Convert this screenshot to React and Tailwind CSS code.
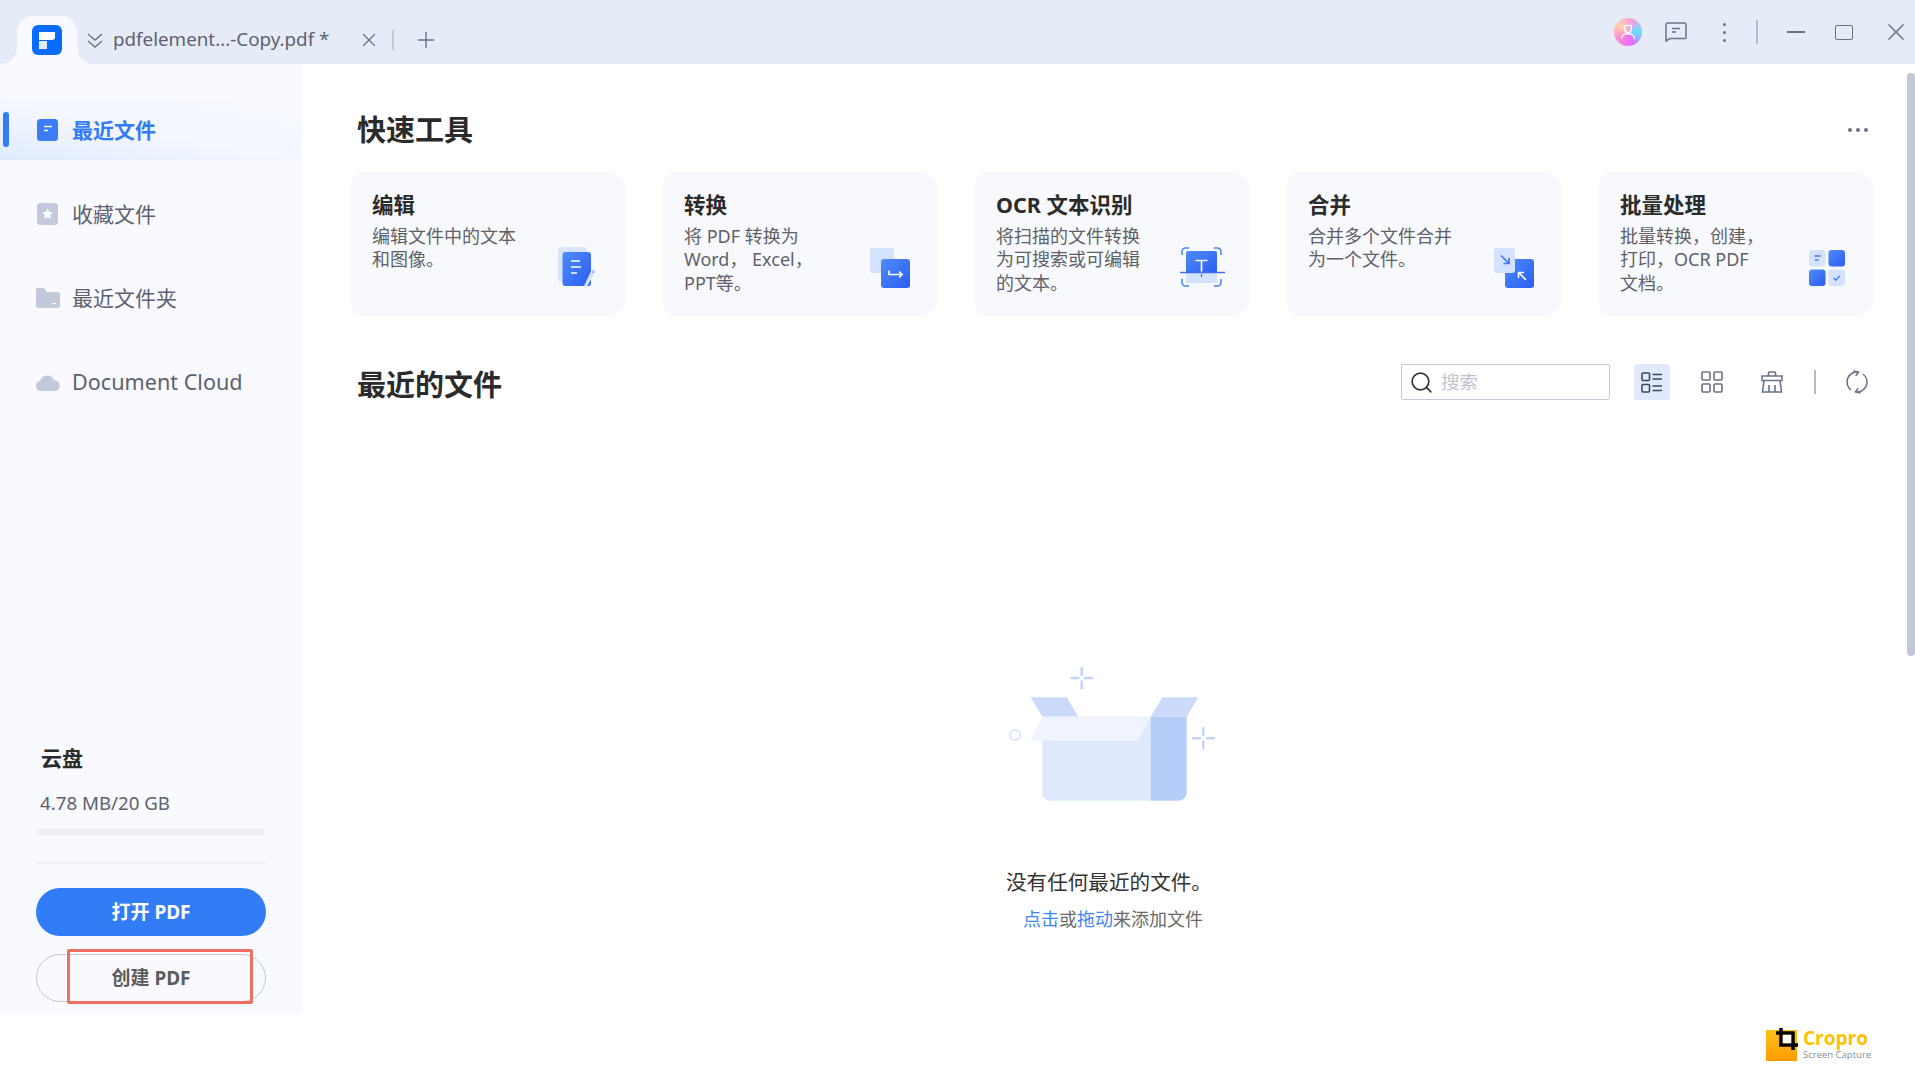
import React from 'react';
import { Plus, Search, X } from 'lucide-react';

const cards = [
  { title: '编辑', lines: ['编辑文件中的文本', '和图像。'], icon: 'edit' },
  { title: '转换', lines: ['将 PDF 转换为', 'Word， Excel，', 'PPT等。'], icon: 'convert' },
  { title: 'OCR 文本识别', lines: ['将扫描的文件转换', '为可搜索或可编辑', '的文本。'], icon: 'ocr' },
  { title: '合并', lines: ['合并多个文件合并', '为一个文件。'], icon: 'merge' },
  { title: '批量处理', lines: ['批量转换，创建，', '打印，OCR PDF', '文档。'], icon: 'batch' },
];

const Blue = ({ id }) => (
  <linearGradient id={id} x1="0" y1="0" x2="1" y2="1">
    <stop offset="0" stopColor="#4f8dfa" />
    <stop offset="1" stopColor="#2b5cf0" />
  </linearGradient>
);

const CardIcon = ({ name }) => {
  if (name === 'edit') {
    return (
      <svg width="40" height="40" viewBox="0 0 40 40" className="mt-[75px] shrink-0">
        <defs><Blue id="g-edit" /></defs>
        <rect x="0" y="0" width="29" height="35" rx="3" fill="#dae5fd" />
        <rect x="4.5" y="5" width="28.5" height="34" rx="3" fill="url(#g-edit)" />
        <path d="M13 14h9M13 20h10M13 26h6" stroke="#fff" strokeWidth="1.5" />
        <path d="M34 22l4 2-9 15.5-3.5.5z" fill="#d5e2fd" />
        <circle cx="35" cy="25" r="0.8" fill="#3a70f0" />
      </svg>
    );
  }
  if (name === 'convert') {
    return (
      <svg width="40" height="40" viewBox="0 0 40 40" className="mt-[76px] shrink-0">
        <defs><Blue id="g-conv" /></defs>
        <rect x="0" y="0" width="24" height="25" rx="3" fill="#d5e2fd" />
        <rect x="11" y="11" width="29" height="29" rx="3" fill="url(#g-conv)" />
        <path d="M19 22.5v4h13M29 23.5l3.2 3-3.2 3" fill="none" stroke="#fff" strokeWidth="1.6" />
      </svg>
    );
  }
  if (name === 'ocr') {
    return (
      <svg width="45" height="40" viewBox="0 0 45 40" className="mt-[75px] -mr-[3px] shrink-0">
        <defs><Blue id="g-ocr" /></defs>
        <rect x="6" y="4" width="31" height="22" rx="2" fill="url(#g-ocr)" />
        <path d="M6 25h31v9a2 2 0 0 1-2 2H8a2 2 0 0 1-2-2z" fill="#d5e2fd" />
        <path d="M0 25.5h45" stroke="#3a70f0" strokeWidth="1.4" />
        <path d="M15.5 13.5h12M21.5 13.5v11" stroke="#fff" strokeWidth="1.6" fill="none" />
        <path d="M21.5 27v3" stroke="#3a70f0" strokeWidth="1.2" />
        <path d="M2 8V4.5A3.5 3.5 0 0 1 5.500 1H9M34 1h3.500A3.500 3.500 0 0 1 41 4.500V8M2 32v3.500A3.500 3.500 0 0 0 5.500 39H9M34 39h3.500a3.500 3.500 0 0 0 3.500-3.500V32" fill="none" stroke="#4a87f7" strokeWidth="1.6" />
      </svg>
    );
  }
  if (name === 'merge') {
    return (
      <svg width="40" height="40" viewBox="0 0 40 40" className="mt-[76px] shrink-0">
        <defs><Blue id="g-merge" /></defs>
        <rect x="11" y="11" width="29" height="29" rx="3" fill="url(#g-merge)" />
        <rect x="0" y="0" width="21" height="25" rx="3" fill="#d5e2fd" />
        <path d="M7 7.500l8 8M15 10v5.500H9.500" fill="none" stroke="#3a78f5" strokeWidth="1.6" />
        <path d="M32 32l-7.500-7.500M24.500 30v-5.500H30" fill="none" stroke="#fff" strokeWidth="1.6" />
      </svg>
    );
  }
  return (
    <svg width="36" height="36" viewBox="0 0 36 36" className="mt-[78px] mr-[1px] shrink-0">
      <defs><Blue id="g-b1" /><Blue id="g-b2" /></defs>
      <rect x="0" y="0" width="16.500" height="16.500" rx="3" fill="#d5e2fd" />
      <rect x="19.500" y="0" width="16.500" height="16.500" rx="3" fill="url(#g-b1)" />
      <rect x="0" y="19.500" width="16.500" height="16.500" rx="3" fill="url(#g-b2)" />
      <rect x="19.500" y="19.500" width="16.500" height="16.500" rx="3" fill="#d5e2fd" />
      <path d="M5.500 6h6M6 10h3.500" stroke="#3a78f5" strokeWidth="1.300" />
      <path d="M24.500 28l2.300 2.200 4-4.200" fill="none" stroke="#3a78f5" strokeWidth="1.300" />
    </svg>
  );
};

const Card = ({ title, lines, icon }) => (
  <div className="w-[275px] h-[144px] rounded-[16px] bg-[#f8f9fd] pl-[22px] pr-[27px] flex justify-between">
    <div className="pt-[18px]">
      <div className="text-[21.500px] leading-[30px] font-bold text-[#2b2b2b]">{title}</div>
      <div className="mt-[4.500px] text-[18px] leading-[23.5px] text-[#5f6168] whitespace-nowrap">
        {lines.map((l) => (
          <div key={l}>{l}</div>
        ))}
      </div>
    </div>
    <CardIcon name={icon} />
  </div>
);

const NavItem = ({ label, active, latin, children }) => (
  <div className={`relative h-[60px] flex items-center pl-[35px] gap-[12px] ${active ? 'bg-gradient-to-tr from-[#e0ebfe] via-[#f4f7ff] to-[#f8faff]' : ''}`}>
    {active && <div className="absolute left-[3px] top-[12px] w-[6px] h-[35px] rounded-full bg-[#327cf6]" />}
    <div className="w-[25px] h-[24px] flex items-center justify-center shrink-0">{children}</div>
    <span className={`pt-[1px] ${latin ? 'text-[21.600px]' : 'text-[21px]'} ${active ? 'font-bold text-[#337cf6]' : 'text-[#5f6170]'}`}>{label}</span>
  </div>
);

const App = () => {
  return (
    <div className="relative w-[1915px] h-[1078px] overflow-hidden bg-white flex flex-col font-['Noto_Sans','Noto_Sans_CJK_SC',sans-serif]">
      {/* title bar */}
      <div className="h-[64px] shrink-0 bg-[#e6ecf7] flex items-center text-[#5f6170]">
        <div className="relative self-end ml-[17px] w-[60px] h-[48px] bg-[#f8faff] rounded-t-[16px] flex items-center justify-center">
          <svg className="absolute left-[-16px] bottom-0" width="16" height="16" viewBox="0 0 16 16">
            <path d="M16 0v16H0a16 16 0 0 0 16-16z" fill="#f8faff" />
          </svg>
          <svg className="absolute right-[-16px] bottom-0" width="16" height="16" viewBox="0 0 16 16">
            <path d="M0 0v16h16a16 16 0 0 1-16-16z" fill="#f8faff" />
          </svg>
          <svg width="30" height="30" viewBox="0 0 30 30">
            <rect width="30" height="30" rx="6" fill="#0a6cff" />
            <path d="M7 7h16v5a3 3 0 0 1-3 3H7z" fill="#fff" />
            <rect x="7" y="16" width="8" height="8" fill="#e3ecfb" />
          </svg>
        </div>
        <div className="flex items-center mt-[16px]">
          <svg width="16" height="16" viewBox="0 0 16 16" fill="none" stroke="#6b7288" strokeWidth="1.400" className="ml-[10px] mr-[4px] mt-[2px]">
            <path d="M1 1l7 6 7-6M1 8l7 6 7-6" />
          </svg>
          <span className="ml-[6px] pb-[2px] w-[245px] text-[18.800px] whitespace-nowrap">pdfelement...-Copy.pdf *</span>
          <X size={22} strokeWidth={1.300} className="text-[#6b7288]" />
          <div className="ml-[12px] w-[2px] h-[20px] bg-[#c3c8d8]" />
          <Plus size={26} strokeWidth={1.300} className="ml-[19px] text-[#6b7288]" />
        </div>

        <div className="ml-auto flex items-center text-[#6b7288]">
          <div className="w-[48px] flex justify-center">
            <div className="w-[28px] h-[28px] rounded-full bg-[conic-gradient(from_90deg,#5fe3ff,#e96bff,#ff8ad0,#ffd2b0,#ff9ce0,#5fe3ff)] flex items-center justify-center">
              <svg width="18" height="18" viewBox="0 0 18 18" fill="none" stroke="#fff" strokeWidth="1.300">
                <path d="M5.500 2.500h7l-.5 4a3 3 0 0 1-6.300 0z" />
                <path d="M2.500 16c0-3 2-5 4-5h5c2 0 4 2 4 5" />
              </svg>
            </div>
          </div>
          <div className="w-[48px] flex justify-center">
            <svg width="22" height="20" viewBox="0 0 22 20" fill="none" stroke="currentColor" strokeWidth="1.500">
              <path d="M1 2.500A1.500 1.500 0 0 1 2.500 1h17A1.500 1.500 0 0 1 21 2.500v13a1 1 0 0 1-1 1H5L1 19z" strokeLinejoin="round" />
              <path d="M7 6.500h8M7 10h4" />
            </svg>
          </div>
          <div className="w-[48px] flex flex-col items-center gap-[5px]">
            <div className="w-[3px] h-[3px] rounded-full bg-current" />
            <div className="w-[3px] h-[3px] rounded-full bg-current" />
            <div className="w-[3px] h-[3px] rounded-full bg-current" />
          </div>
          <div className="w-[18px] flex justify-center">
            <div className="w-[2px] h-[24px] bg-[#b4bace]" />
          </div>
          <div className="w-[60px] flex justify-center">
            <div className="w-[18px] h-[2px] bg-current" />
          </div>
          <div className="w-[36px] flex justify-center">
            <div className="w-[18px] h-[15px] rounded-[2px] border-[1.500px] border-current" />
          </div>
          <div className="ml-[15px] w-[38px] flex justify-center">
            <svg width="16" height="16" viewBox="0 0 16 16" stroke="currentColor" strokeWidth="1.500">
              <path d="M.5.500l15 15M15.500.500l-15 15" />
            </svg>
          </div>
        </div>
      </div>

      <div className="flex flex-1 min-h-0">
        {/* sidebar */}
        <div className="w-[302px] h-[950px] shrink-0 bg-[#f8faff] flex flex-col pt-[36px]">
          <div className="flex flex-col gap-[24px]">
            <NavItem label="最近文件" active>
              <svg width="21" height="22" viewBox="0 0 21 22">
                <rect width="21" height="22" rx="3.500" fill="#3a7df6" />
                <path d="M7 7.500h8M7 11.500h4" stroke="#fff" strokeWidth="1.500" />
              </svg>
            </NavItem>
            <NavItem label="收藏文件">
              <svg width="21" height="22" viewBox="0 0 21 22">
                <rect width="21" height="22" rx="3.500" fill="#c3c8da" />
                <path d="M10.500 5.500l1.700 3.500 3.800.5-2.800 2.600.7 3.800-3.400-1.900-3.400 1.900.7-3.800L5 9.500l3.800-.5z" fill="#fff" />
              </svg>
            </NavItem>
            <NavItem label="最近文件夹">
              <svg width="24" height="20" viewBox="0 0 24 20">
                <path d="M0 2a2 2 0 0 1 2-2h6l3 4h11a2 2 0 0 1 2 2v12a2 2 0 0 1-2 2H2a2 2 0 0 1-2-2z" fill="#c3c8da" />
                <path d="M16 15.500h4" stroke="#fff" strokeWidth="1.200" />
              </svg>
            </NavItem>
            <NavItem label="Document Cloud" latin>
              <svg width="24" height="18" viewBox="0 0 24 18">
                <path d="M5 18a5 5 0 0 1-1-9.900A8 8 0 0 1 19 7.500 5.300 5.300 0 0 1 19 18z" fill="#c3c8da" />
                <path d="M14 2.500a5.500 5.500 0 0 1 3.500 5" fill="none" stroke="#f8faff" strokeWidth="0.800" />
              </svg>
            </NavItem>
          </div>

          <div className="mt-auto px-[36px] pb-[12px]">
            <div className="pl-[5px] text-[21px] leading-[30px] font-bold text-[#2b2b2b]">云盘</div>
            <div className="pl-[4px] mt-[16px] text-[18.700px] leading-[28px] text-[#5f6170]">4.78 MB/20 GB</div>
            <div className="mt-[12px] ml-[1px] w-[228px] h-[6px] rounded-full bg-[#eeeff4]" />
            <div className="mt-[27px] w-[230px] h-[2px] bg-[#eeeff4]" />
            <button className="mt-[24px] w-[230px] h-[48px] rounded-full bg-[#327cf6] text-white text-[19px] leading-[44px] font-bold">打开 PDF</button>
            <div className="relative mt-[18px]">
              <button className="w-[230px] h-[48px] rounded-full border-[1.500px] border-[#c3c8d8] text-[#5c5c5c] text-[19px] leading-[40px] font-bold">创建 PDF</button>
              <div className="absolute left-[31px] top-[-5px] w-[186px] h-[55px] border-[3px] border-[#ef6f63] rounded-[2px]" />
            </div>
          </div>
        </div>

        {/* main */}
        <div className="flex-1 pt-[38px] pl-[48px] pr-[42px] flex flex-col">
          <div className="h-[56px] flex items-center justify-between pl-[7px]">
            <h2 className="text-[29px] font-bold text-[#2b2b2b]">快速工具</h2>
            <div className="flex gap-[4px] mr-[5px]">
              <div className="w-[4px] h-[4px] rounded-full bg-[#6b7288]" />
              <div className="w-[4px] h-[4px] rounded-full bg-[#6b7288]" />
              <div className="w-[4px] h-[4px] rounded-full bg-[#6b7288]" />
            </div>
          </div>

          <div className="mt-[14px] flex justify-between">
            {cards.map((c) => (
              <Card key={c.title} {...c} />
            ))}
          </div>

          <div className="mt-[48px] h-[36px] flex items-center">
            <h2 className="pl-[7px] pt-[6px] text-[29px] font-bold text-[#2b2b2b]">最近的文件</h2>
            <div className="ml-auto w-[209px] h-[36px] rounded-[2px] border-[1.500px] border-[#c3c8d8] flex items-center pl-[7px] gap-[7px]">
              <Search size={25} strokeWidth={1.600} className="text-[#30343c]" />
              <span className="text-[18.500px] text-[#c0c4d0]">搜索</span>
            </div>
            <div className="ml-[24px] w-[36px] h-[36px] rounded-[3px] bg-[#e0eafc] flex items-center justify-center">
              <svg width="22" height="21" viewBox="0 0 22 21" fill="none" stroke="#3f4660" strokeWidth="1.600">
                <rect x="1" y="1" width="7.500" height="7.500" rx="1" />
                <rect x="1" y="12.500" width="7.500" height="7.500" rx="1" />
                <path d="M11.500 2.500H21M11.500 7H21M11.500 14H21M11.500 18.500H21" />
              </svg>
            </div>
            <div className="ml-[24px] w-[36px] flex justify-center">
              <svg width="22" height="22" viewBox="0 0 22 22" fill="none" stroke="#6b7288" strokeWidth="1.600">
                <rect x="1" y="1" width="8" height="8" rx="1" />
                <rect x="13" y="1" width="8" height="8" rx="1" />
                <rect x="1" y="13" width="8" height="8" rx="1" />
                <rect x="13" y="13" width="8" height="8" rx="1" />
              </svg>
            </div>
            <div className="ml-[24px] w-[36px] flex justify-center">
              <svg width="22" height="22" viewBox="0 0 22 22" fill="none" stroke="#6b7288" strokeWidth="1.600">
                <path d="M7.500 5V2a1 1 0 0 1 1-1h5a1 1 0 0 1 1 1v3" />
                <path d="M1 5h20v4.500H1z" />
                <path d="M3 9.500L1.500 21h19L19 9.500" />
                <path d="M8 14v7M14 14v7" />
              </svg>
            </div>
            <div className="ml-[24px] w-[2px] h-[24px] bg-[#b4bace]" />
            <div className="ml-[25px] w-[32px] flex justify-center">
              <svg width="24" height="24" viewBox="0 0 24 24" fill="none" stroke="#6b7288" strokeWidth="1.500">
                <path d="M13.500 2.100A10 10 0 0 0 6 20" />
                <path d="M10.500 21.900A10 10 0 0 0 18 4" />
                <path d="M8.500 1l5 1.200-2.800 3.500M15.500 23l-5-1.200 2.800-3.500" />
              </svg>
            </div>
          </div>

          {/* empty state */}
          <div className="relative flex flex-col">
            <svg width="320" height="180" viewBox="0 0 320 180" className="mt-[240px] ml-[610px]">
              <path d="M70.700 57.300h36l11.600 19.400h-36z" fill="#cbdafa" />
              <path d="M202.300 57.300h36l-11.600 19.400h-36z" fill="#cddbfb" />
              <path d="M82.300 76.700h108.400v84H90.300a8 8 0 0 1-8-8z" fill="#dfe8fd" />
              <path d="M190.700 76.700h36v76a8 8 0 0 1-8 8h-28z" fill="#b7cdf9" />
              <path d="M82.300 76.700h108.400l-12.400 24H70.700z" fill="#f0f4fe" />
              <path d="M111.500 38h7M125 38h7M121.700 28v7M121.700 41.500v7M233 98.300h7M247 98.300h7M243.300 88v7M243.300 101.500v7" stroke="#c3d4fa" strokeWidth="2.500" strokeLinecap="round" />
              <circle cx="55.300" cy="95" r="5" fill="none" stroke="#dbe5fd" strokeWidth="2" />
            </svg>
            <div className="mt-[48px] ml-[656px] text-[20.600px] leading-[28px] text-[#333]">没有任何最近的文件。</div>
            <div className="mt-[11px] ml-[673px] text-[18px] leading-[24px] text-[#6a6a6a]">
              <span className="text-[#3f86f7]">点击</span>或<span className="text-[#3f86f7]">拖动</span>来添加文件
            </div>
          </div>
        </div>
      </div>

      {/* scrollbar */}
      <div className="absolute right-0 top-[73px] w-[8px] h-[583px] rounded-full bg-[#c3c8d8]" />

      {/* screen capture watermark */}
      <div className="absolute left-[1766px] top-[1026px] flex items-center gap-[7px]">
        <svg width="34" height="36" viewBox="0 0 34 36" className="shrink-0">
          <defs>
            <linearGradient id="g-wm" x1="0" y1="0" x2="0" y2="1">
              <stop offset="0" stopColor="#ffc21a" />
              <stop offset="1" stopColor="#ff9a00" />
            </linearGradient>
          </defs>
          <rect x="0" y="4" width="31" height="31" fill="url(#g-wm)" />
          <path d="M15 2v17h17M10 7h17v17" fill="none" stroke="#000" strokeWidth="3.500" />
          <rect x="16.800" y="8.800" width="8.400" height="8.400" fill="#fff" />
        </svg>
        <div className="-ml-[4px] flex flex-col font-['Open_Sans',sans-serif]">
          <span className="text-[19px] leading-[22px] font-bold text-[#ffc000]">Cropro</span>
          <span className="text-[9.500px] leading-[12px] text-[#8a8f98] whitespace-nowrap">Screen Capture</span>
        </div>
      </div>
    </div>
  );
};

export default App;
